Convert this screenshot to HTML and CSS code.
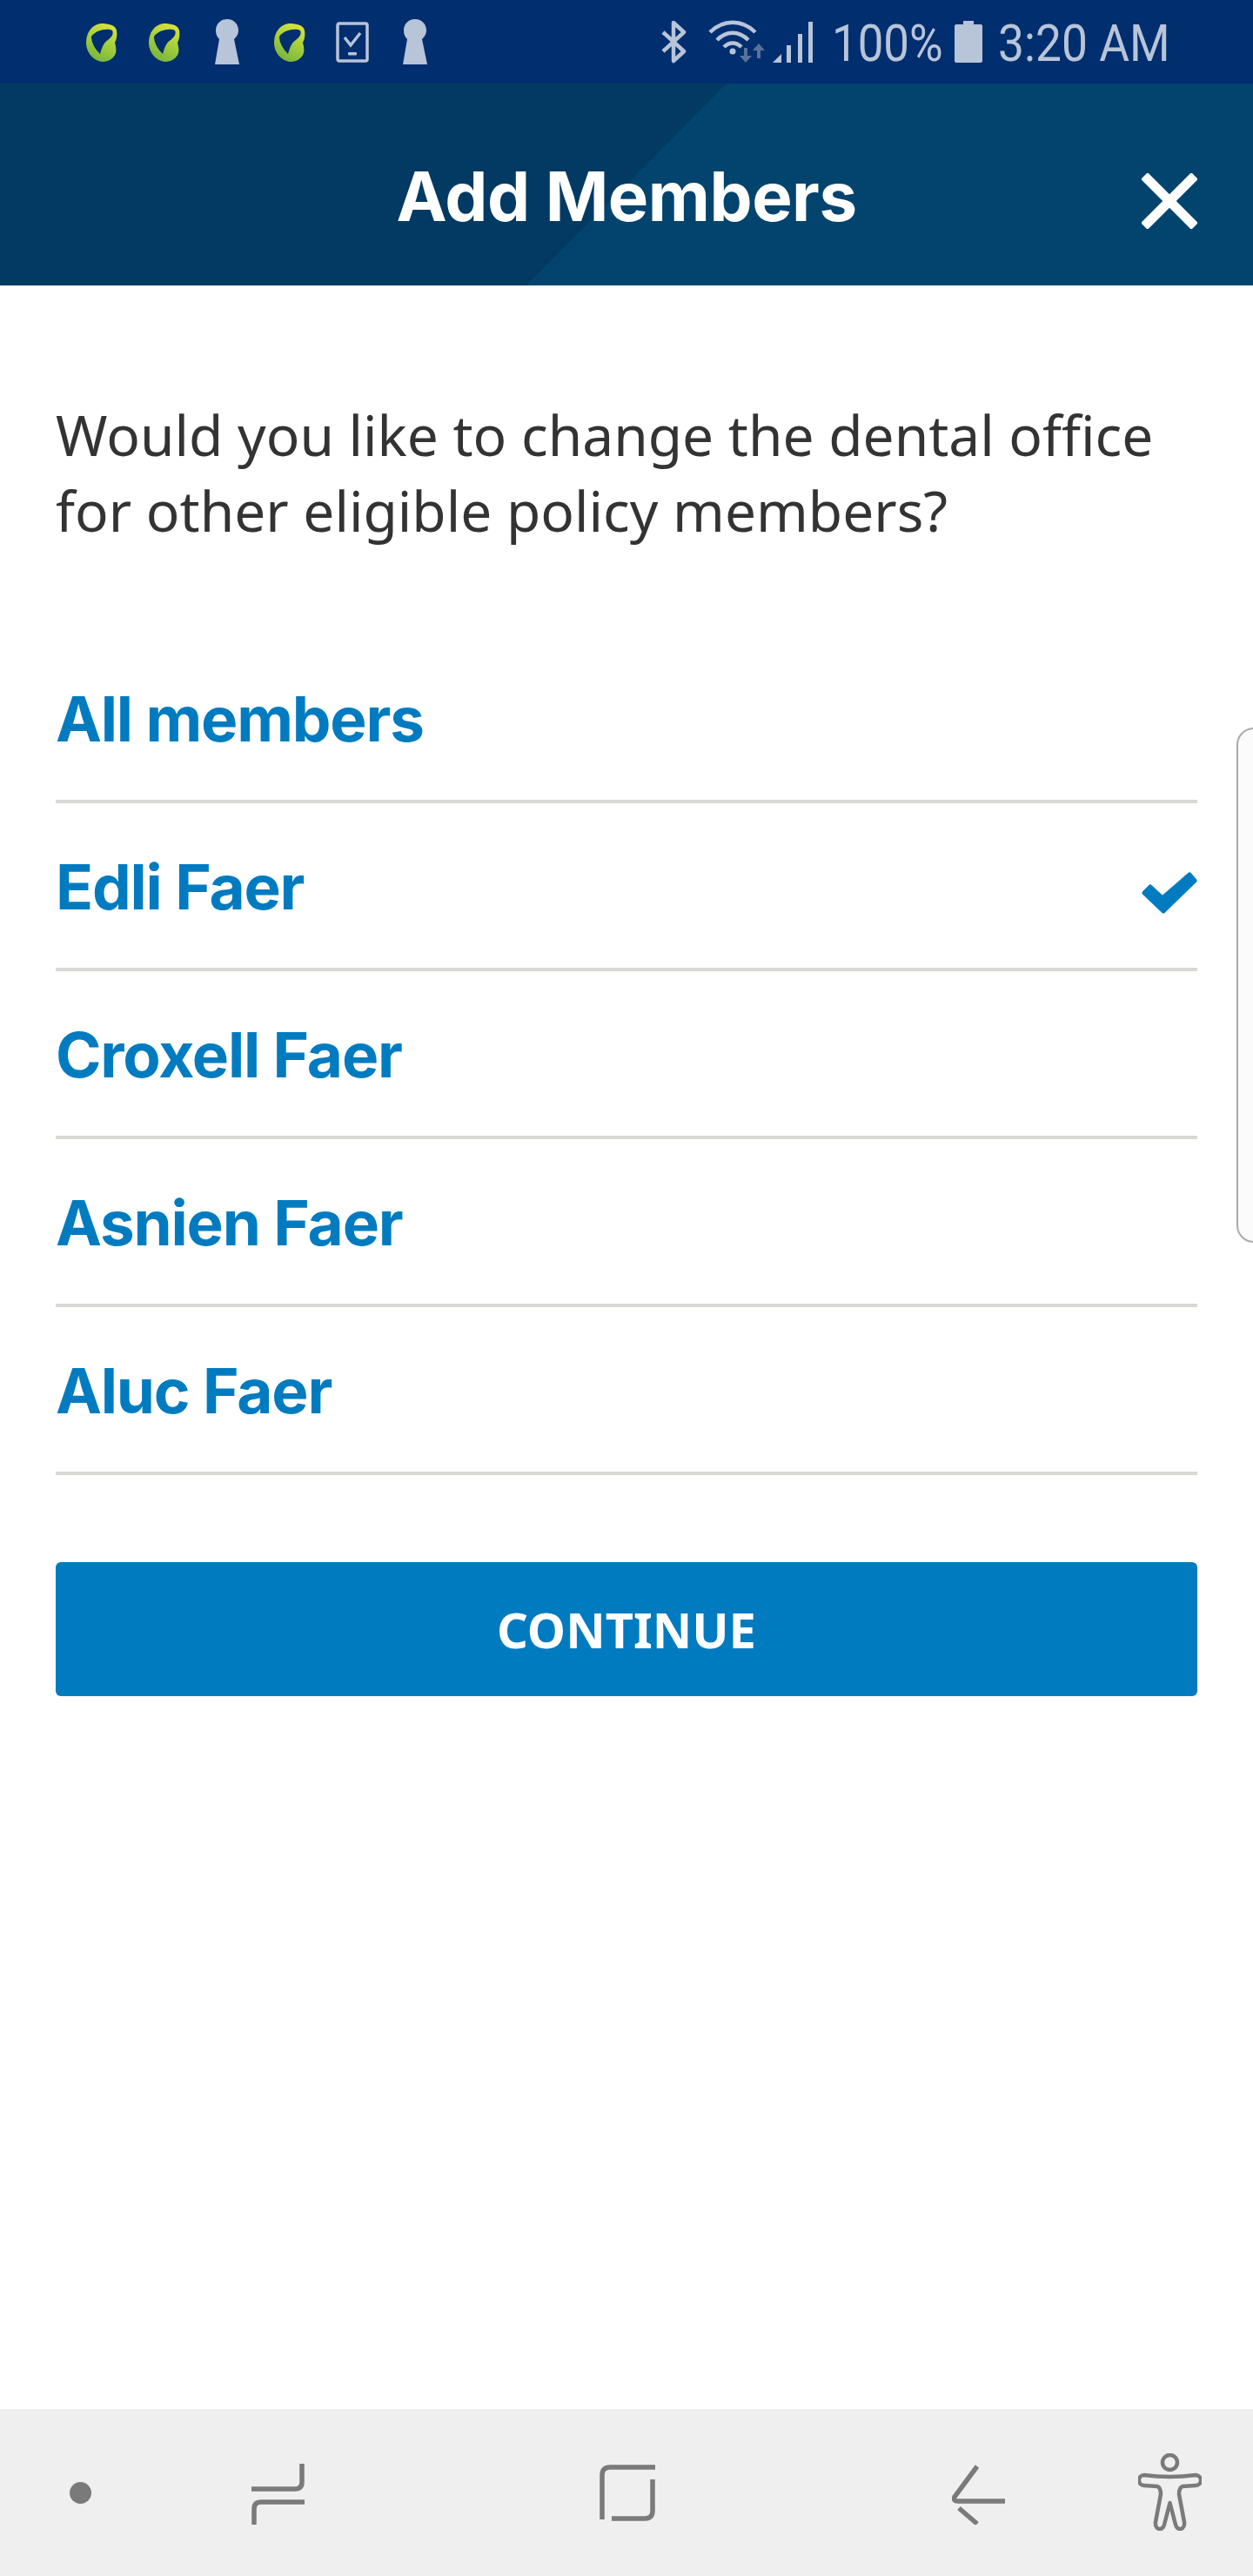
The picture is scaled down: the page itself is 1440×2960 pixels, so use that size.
FILE: index.html
```html
<!DOCTYPE html>
<html lang="en">
<head>
    <meta charset="UTF-8">
    <meta name="viewport" content="width=device-width, initial-scale=1.0">
    <title>Add Members</title>
    <link rel="stylesheet" href="styles.css">
</head>
<body>
    <svg class="defs" width="0" height="0">
        <defs>
            <linearGradient id="leaf" x1="0.8" y1="0" x2="0.4" y2="1">
                <stop offset="0" stop-color="#dbe43c"/>
                <stop offset="0.5" stop-color="#a6cf3c"/>
                <stop offset="1" stop-color="#78b53f"/>
            </linearGradient>
            <symbol id="ear" viewBox="0 0 36 44">
                <path fill="url(#leaf)" d="M17 0C26 0 34 2 35 8C36 14 35 18 33 22C34 26 35 30 34 34C32 40 26 44 19 44C8 43 0 33 0 22C0 10 7 1 17 0Z"/>
                <path fill="#012e6e" d="M6 15C11 7 25 5 30 8C32 12 29 16 25 19C20 22 18 28 16 35C11 30 6 23 6 15Z"/>
            </symbol>
            <symbol id="keyhole" viewBox="0 0 28 52">
                <path fill="#b8c4d8" d="M14 0C22 0 27 6 27 13C27 18 24 21 22 23L28 52H0L5 23C3 21 1 18 1 13C1 6 6 0 14 0Z"/>
            </symbol>
        </defs>
    </svg>

    <div class="status-bar">
        <div class="status-left">
            <svg class="ico-ear"><use href="#ear"/></svg>
            <svg class="ico-ear"><use href="#ear"/></svg>
            <svg class="ico-key"><use href="#keyhole"/></svg>
            <svg class="ico-ear"><use href="#ear"/></svg>
            <svg class="ico-phone" viewBox="0 0 38 47">
                <rect x="2" y="2" width="34" height="43" rx="2" fill="none" stroke="#b8c4d8" stroke-width="3.5"/>
                <path d="M10 18L17 27L28 13" fill="none" stroke="#b8c4d8" stroke-width="3.5"/>
                <rect x="14" y="35" width="10" height="3.5" rx="1" fill="#b8c4d8"/>
            </svg>
            <svg class="ico-key"><use href="#keyhole"/></svg>
        </div>
        <div class="status-right">
            <svg class="ico-bt" viewBox="0 0 32 50">
                <path d="M3 14L27 36L15 47V3L27 14L3 36" fill="none" stroke="#b8c4d8" stroke-width="4.5" stroke-linejoin="round"/>
            </svg>
            <svg class="ico-wifi" viewBox="0 0 68 50">
                <path d="M2 14C17 -1 39 -1 54 14" fill="none" stroke="#b8c4d8" stroke-width="4.5"/>
                <path d="M10 23C21 12 35 12 46 23" fill="none" stroke="#b8c4d8" stroke-width="4.5"/>
                <path d="M18 31C24 25 32 25 38 31" fill="none" stroke="#b8c4d8" stroke-width="4.5"/>
                <circle cx="28" cy="36" r="3.5" fill="#b8c4d8"/>
                <path d="M41 32H45V41H50L43 49L36 41H41Z" fill="#5a7299"/>
                <path d="M56 44H60V35H65L58 27L51 35H56Z" fill="#5a7299"/>
            </svg>
            <svg class="ico-signal" viewBox="0 0 46 47">
                <path d="M0 47L10 37V47Z" fill="#b8c4d8"/>
                <rect x="16" y="27" width="5" height="20" fill="#b8c4d8"/>
                <rect x="29" y="14" width="5" height="33" fill="#b8c4d8"/>
                <rect x="41" y="0" width="5" height="47" fill="#b8c4d8"/>
            </svg>
            <span class="status-text pct">100%</span>
            <svg class="ico-battery" viewBox="0 0 32 48">
                <path d="M10 0H22V4H30Q32 4 32 6V46Q32 48 30 48H2Q0 48 0 46V6Q0 4 2 4H10Z" fill="#b8c4d8"/>
            </svg>
            <span class="status-text clock">3:20 AM</span>
        </div>
    </div>

    <header class="header">
        <span></span>
        <h1>Add Members</h1>
        <svg class="close" viewBox="0 0 64 64">
            <path d="M3 3L61 61M61 3L3 61" stroke="#fff" stroke-width="11"/>
        </svg>
    </header>

    <main class="content">
        <p class="question">Would you like to change the dental office for other eligible policy members?</p>

        <ul class="member-list">
            <li class="member">All members</li>
            <li class="member">
                Edli Faer
                <svg class="check" viewBox="0 0 64 48">
                    <path d="M3 24L10 17L24 30L55 3L61 10L25 45Z" fill="#007bc0" stroke="#007bc0" stroke-width="5" stroke-linejoin="round"/>
                </svg>
            </li>
            <li class="member">Croxell Faer</li>
            <li class="member">Asnien Faer</li>
            <li class="member">Aluc Faer</li>
        </ul>

        <button class="continue">CONTINUE</button>
    </main>

    <div class="side-handle"></div>

    <nav class="nav-bar">
        <span class="nav-dot"></span>
        <svg class="ico-recents" viewBox="0 0 61 70">
            <path d="M0 29H50Q58 29 58 21V0M61 44H11Q3 44 3 52V70" fill="none" stroke="#7a7a7a" stroke-width="5.5"/>
        </svg>
        <svg class="ico-home" viewBox="0 0 64 65">
            <path d="M3 63V12Q3 3 12 3H64M14 62H52Q61 62 61 53V17" fill="none" stroke="#7a7a7a" stroke-width="5.5"/>
        </svg>
        <svg class="ico-back" viewBox="0 0 61 69">
            <path d="M29 2L3 37Q1 42 7 42H61M8 50L29 68" fill="none" stroke="#7a7a7a" stroke-width="5.5"/>
        </svg>
        <svg class="ico-access" viewBox="0 0 73 89">
            <circle cx="36.5" cy="10.5" r="8.5" fill="none" stroke="#7a7a7a" stroke-width="4.5"/>
            <path d="M7 25Q36 29 66 25C74 25 74 37 66 37L51 38C48 39 47 43 47 47L53 79C54 88 45 90 43 82L36.5 57L30 82C28 90 19 88 20 79L26 47C26 43 25 39 22 38L7 37C-1 37 -1 25 7 25Z" fill="none" stroke="#7a7a7a" stroke-width="4.5" stroke-linejoin="round"/>
        </svg>
    </nav>
</body>
</html>
```

FILE: styles.css
```css
* {
    box-sizing: border-box;
}
html, body {
    margin: 0;
    padding: 0;
}
body {
    position: relative;
    width: 1440px;
    height: 2960px;
    display: flex;
    flex-direction: column;
    background-color: #fff;
    font-family: "Noto Sans", sans-serif;
    color: #333;
    overflow: hidden;
}
.defs {
    position: absolute;
}

/* status bar */
.status-bar {
    height: 96px;
    flex: none;
    display: flex;
    justify-content: space-between;
    align-items: center;
    padding: 0 100px 0 99px;
    background-color: #012e6e;
}
.status-left, .status-right {
    display: flex;
    align-items: center;
}
.status-left {
    gap: 36px;
}
.status-left svg {
    display: block;
}
.ico-ear {
    width: 36px;
    height: 44px;
    margin-top: 1px;
}
.ico-key {
    width: 28px;
    height: 52px;
    margin: 0 4px;
}
.ico-phone {
    width: 38px;
    height: 47px;
    margin: 0 -1px 0 -1px;
}
.ico-bt {
    width: 32px;
    height: 50px;
    margin-right: 23px;
}
.ico-wifi {
    width: 68px;
    height: 50px;
    margin-right: 6px;
}
.ico-signal {
    width: 46px;
    height: 47px;
    margin-right: 22px;
}
.ico-battery {
    width: 32px;
    height: 48px;
    margin: 0 18px 0 19px;
}
.status-text {
    font-family: Roboto, sans-serif;
    font-weight: 400;
    font-size: 60px;
    line-height: 60px;
    color: #b8c4d8;
    display: inline-block;
    white-space: nowrap;
    transform-origin: left center;
    margin-top: 3px;
}
.pct {
    width: 122px;
    transform: scaleX(0.88);
}
.clock {
    width: 193px;
    transform: scaleX(0.89);
}

/* header */
.header {
    position: relative;
    height: 232px;
    flex: none;
    display: grid;
    grid-template-columns: 1fr auto 1fr;
    align-items: center;
    padding: 38px 64px 0;
    background-color: #03446f;
}
.header::before {
    content: "";
    position: absolute;
    inset: 0;
    background-color: #033a63;
    clip-path: polygon(0 0, 835px 0, 605px 100%, 0 100%);
}
.header h1 {
    position: relative;
    margin: -10px 0 0;
    font-family: Inter, sans-serif;
    font-weight: 700;
    font-size: 78px;
    letter-spacing: -0.5px;
    line-height: 1;
    color: #fff;
}
.close {
    position: relative;
    justify-self: end;
    width: 64px;
    height: 64px;
}

/* content */
.content {
    flex: 1;
    padding: 0 64px;
}
.question {
    margin: 0;
    padding-top: 128px;
    font-size: 64px;
    line-height: 87px;
    color: #333;
}
.member-list {
    list-style: none;
    margin: 100px 0 0;
    padding: 0;
}
.member {
    height: 193px;
    display: flex;
    justify-content: space-between;
    align-items: center;
    padding-top: 2px;
    border-bottom: 4px solid #d8d8d4;
    font-family: Inter, sans-serif;
    font-weight: 700;
    font-size: 71px;
    letter-spacing: -1.2px;
    color: #007bc0;
}
.check {
    width: 64px;
    height: 48px;
    margin-top: 14px;
}
.continue {
    display: block;
    width: 100%;
    height: 154px;
    margin-top: 100px;
    border: none;
    border-radius: 6px;
    background-color: #007bc0;
    color: #fff;
    font-family: "Noto Sans", sans-serif;
    font-weight: 700;
    font-size: 56px;
}

/* edge panel handle */
.side-handle {
    position: absolute;
    left: 1421px;
    top: 836px;
    width: 40px;
    height: 592px;
    border: 2px solid #aaa;
    border-radius: 22px;
    background-color: #fbfbfb;
}

/* nav bar */
.nav-bar {
    position: relative;
    height: 192px;
    flex: none;
    display: flex;
    align-items: center;
    background-color: #efefef;
    padding-left: 80px;
}
.nav-dot {
    width: 25px;
    height: 25px;
    border-radius: 50%;
    background-color: #7a7a7a;
    margin-right: 184px;
}
.ico-recents {
    width: 61px;
    height: 70px;
    margin-right: 339px;
    margin-top: 4px;
}
.ico-home {
    width: 64px;
    height: 65px;
    margin-right: 341px;
}
.ico-back {
    width: 61px;
    height: 69px;
    margin-right: 153px;
    margin-top: 4px;
}
.ico-access {
    width: 73px;
    height: 89px;
    margin-top: -2px;
}
```
